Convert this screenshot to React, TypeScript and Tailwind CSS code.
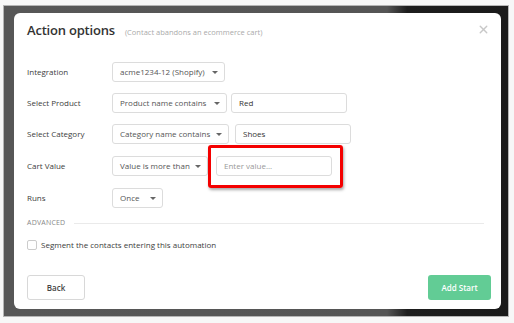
import { X } from "lucide-react";

const font = { fontFamily: '"Open Sans", "Liberation Sans", sans-serif' };

function Caret() {
  return (
    <svg width="6" height="3" viewBox="0 0 6 3" className="shrink-0">
      <path d="M0 0 L6 0 L3 3 Z" fill="#666" />
    </svg>
  );
}

function Select({ label, w }: { label: string; w: string }) {
  return (
    <div
      className={`${w} flex h-[20px] items-center justify-between rounded-[3px] border border-[#dcdcdc] bg-white pl-[7px] pr-[6px] text-[8px] text-[#555]`}
    >
      <span>{label}</span>
      <Caret />
    </div>
  );
}

function Input({ value, placeholder }: { value?: string; placeholder?: string }) {
  return (
    <div className="flex h-[20px] w-[116px] items-center rounded-[3px] border border-[#dcdcdc] bg-white px-[7px] text-[8px]">
      {value ? <span className="text-[#333]">{value}</span> : <span className="text-[#999]">{placeholder}</span>}
    </div>
  );
}

function Row({ label, children, className = "" }: { label: string; children: React.ReactNode; className?: string }) {
  return (
    <div className={`flex items-center ${className}`}>
      <div className="w-[85px] text-[8px] text-[#3d3d3d]">{label}</div>
      {children}
    </div>
  );
}

export default function App() {
  return (
    <div className="h-[323px] w-[514px] bg-[#f7f7f7] pl-[3px] pr-[5px] pt-[5px] pb-[6px]" style={font}>
      <div className="h-full w-full border border-[#b5b5b5] bg-[linear-gradient(90deg,#575757_0%,#555_76%,#1d1d1d_80%,#1a1a1a_100%)] pl-[10px] pr-[7px] pt-[7px] pb-[7px]">
        <div className="relative flex h-full w-full flex-col rounded-[6px] bg-white px-[13px]">
          <button className="absolute right-[11px] top-[10px] text-[#c8c8c8]">
            <X size={13} strokeWidth={2.5} />
          </button>

          <div className="mt-[8px] flex h-[22px] items-baseline gap-[10px]">
            <h1 className="text-[13px] font-semibold tracking-[-0.2px] text-[#333]">Action options</h1>
            <span className="text-[7.5px] text-[#aaa]">(Contact abandons an ecommerce cart)</span>
          </div>

          <Row label="Integration" className="mt-[19px]">
            <Select label="acme1234-12 (Shopify)" w="w-[113px]" />
          </Row>

          <Row label="Select Product" className="mt-[11px]">
            <Select label="Product name contains" w="w-[115px]" />
            <div className="ml-[4px]">
              <Input value="Red" />
            </div>
          </Row>

          <Row label="Select Category" className="mt-[11px]">
            <Select label="Category name contains" w="w-[117px]" />
            <div className="ml-[6px]">
              <Input value="Shoes" />
            </div>
          </Row>

          <Row label="Cart Value" className="mt-[12px]">
            <Select label="Value is more than" w="w-[96px]" />
            <div className="relative ml-[8px]">
              <Input placeholder="Enter value..." />
              <div className="absolute -left-[8px] -top-[11px] h-[43px] w-[135px] rounded-[3px] border-[3px] border-[#f40000] shadow-[1px_2px_3px_rgba(0,0,0,0.35)]" />
            </div>
          </Row>

          <Row label="Runs" className="mt-[12px]">
            <Select label="Once" w="w-[51px]" />
          </Row>

          <div className="mt-[10px] flex items-center gap-[9px]">
            <span className="text-[7px] tracking-[0.2px] text-[#888]">ADVANCED</span>
            <div className="mr-[4px] h-px flex-1 bg-[#eaeaea]" />
          </div>

          <div className="mt-[10px] flex items-center gap-[4px]">
            <div className="h-[10px] w-[10px] rounded-[2px] border border-[#ccc] bg-white" />
            <span className="text-[8px] text-[#3d3d3d]">Segment the contacts entering this automation</span>
          </div>

          <div className="mt-auto mb-[9px] flex items-center justify-between">
            <button className="flex h-[25px] w-[58px] items-center justify-center rounded-[3px] border border-[#d8d8d8] bg-white text-[8px] font-semibold text-[#444]">
              Back
            </button>
            <button className="mr-[-3px] flex h-[25px] w-[63px] items-center justify-center rounded-[3px] bg-[#62cc95] text-[8px] font-semibold text-white">
              Add Start
            </button>
          </div>
        </div>
      </div>
    </div>
  );
}
